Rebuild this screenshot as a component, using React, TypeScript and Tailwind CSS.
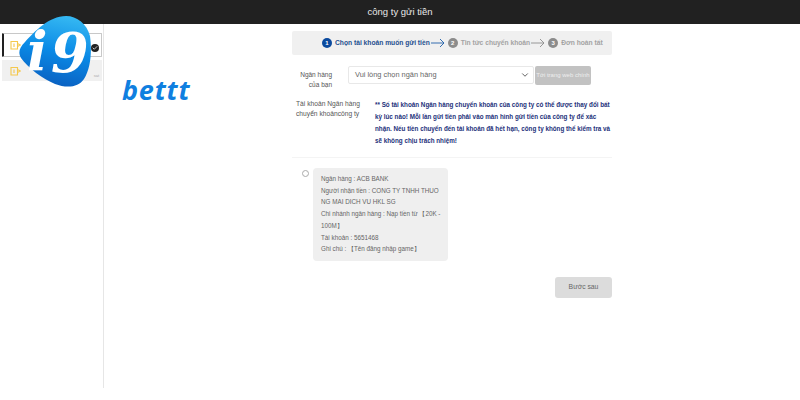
import React from "react";
import { ChevronDown, Check } from "lucide-react";

const steps = [
  { n: 1, label: "Chọn tài khoản muốn gửi tiền", active: true },
  { n: 2, label: "Tin tức chuyển khoản", active: false },
  { n: 3, label: "Đơn hoàn tất", active: false },
];

const Arrow = ({ color }: { color: string }) => (
  <svg width="14" height="10" viewBox="0 0 14 10" fill="none" stroke={color} strokeWidth="0.9" className="shrink-0">
    <path d="M0 5h13M9 1l4 4-4 4" />
  </svg>
);

const SideIcon = () => (
  <svg width="11" height="10" viewBox="0 0 11 10" fill="none" stroke="#f5c84c" strokeWidth="1.1" className="shrink-0">
    <path d="M1 1.500h6.500v7.500H1zM7.500 3.500L10.500 5l-3 1.500M4 3.500v3.500" />
  </svg>
);

const App: React.FC = () => {
  return (
    <div className="relative w-[800px] h-[400px] overflow-hidden bg-white font-['Liberation_Sans',Arial,sans-serif]">
      {/* Header */}
      <div className="h-[24px] bg-[#212121] flex items-center justify-center">
        <span className="text-[9.500px] text-[#e8e8e8]">công ty gửi tiền</span>
      </div>

      <div className="flex h-[364px]">
        {/* Sidebar */}
        <div className="w-[104px] border-r border-[#e6e6e6] pt-[9px] pl-[2px] pr-[1px]">
          <div className="h-[24px] border border-[#c8c8c8] border-l-[2px] border-l-[#222] rounded-[1px] flex items-center justify-between pl-[6px] pr-[2px]">
            <SideIcon />
            <span className="w-[8px] h-[8px] mt-[5px] rounded-full bg-[#222] flex items-center justify-center">
              <Check size={6} color="#fff" strokeWidth={3} />
            </span>
          </div>
          <div className="h-[21px] mt-[3px] bg-[#f0f0f0] flex items-center justify-between pl-[8px] pr-[3px]">
            <SideIcon />
            <span className="text-[4px] text-[#aaa] mt-[10px]">sat</span>
          </div>
        </div>

        {/* Main column */}
        <div className="ml-[188px] w-[320px] pt-[7px]">
          <div className="h-[24px] bg-[#f0f0f0] rounded-[2px] flex items-center pl-[30px] text-[6.700px] font-bold">
            {steps.map((s, i) => (
              <React.Fragment key={s.n}>
                <span
                  className={`shrink-0 w-[10px] h-[10px] rounded-full text-white flex items-center justify-center text-[6px] mr-[3px] ${
                    s.active ? "bg-[#0b4a9e]" : "bg-[#8c8c8c]"
                  }`}
                >
                  {s.n}
                </span>
                <span className={`whitespace-nowrap ${s.active ? "text-[#1f4f8f]" : "text-[#a3a3a3]"}`}>{s.label}</span>
                {i < 2 && (
                  <span className="ml-[1px] mr-[3px]">
                    <Arrow color={s.active ? "#1f5fa8" : "#8c8c8c"} />
                  </span>
                )}
              </React.Fragment>
            ))}
          </div>

          {/* Bank select */}
          <div className="flex mt-[11px]">
            <div className="w-[40px] pt-[4px] text-right text-[6.500px] leading-[10px] text-[#555] whitespace-nowrap">
              <div>Ngân hàng</div>
              <div>của bạn</div>
            </div>
            <div className="ml-[16px] w-[186px] h-[18px] border border-[#e8e8e8] rounded-[2px] flex items-center justify-between pl-[6px] pr-[3px] text-[7.400px] text-[#666]">
              <span>Vui lòng chọn ngân hàng</span>
              <ChevronDown size={10} color="#444" strokeWidth={2} />
            </div>
            <div className="ml-[1px] w-[56px] h-[19px] bg-[#c2c2c2] rounded-[2px] text-[6px] text-[#eee] flex items-center justify-center overflow-hidden whitespace-nowrap">
              Tới trang web chính
            </div>
          </div>

          {/* Notice */}
          <div className="flex mt-[9px] pb-[10px] border-b border-[#f4f4f4]">
            <div className="w-[68px] shrink-0 pl-[4px] text-[6.700px] leading-[10px] text-[#555] whitespace-nowrap">
              <div>Tài khoản Ngân hàng</div>
              <div>chuyển khoảncông ty</div>
            </div>
            <p className="ml-[15px] text-[6.300px] leading-[12px] font-bold text-[#23307a]">
              ** Số tài khoản Ngân hàng chuyển khoản của công ty có thể được thay đổi bất kỳ lúc nào! Mỗi lần gửi tiền phải vào màn hình gửi tiền của công ty để xác nhận. Nếu tiền chuyển đến tài khoản đã hết hạn, công ty không thể kiểm tra và sẽ không chịu trách nhiệm!
            </p>
          </div>

          {/* Account card */}
          <div className="flex mt-[10px]">
            <span className="shrink-0 w-[7px] h-[7px] mt-[2px] ml-[10px] rounded-full border border-[#aaa] bg-white" />
            <div className="ml-[4px] w-[135px] h-[93px] bg-[#efefef] rounded-[4px] pl-[8px] pt-[5px] text-[6.300px] leading-[11.700px] text-[#666] whitespace-nowrap">
              <div>Ngân hàng : ACB BANK</div>
              <div>Người nhận tiền : CONG TY TNHH THUO</div>
              <div>NG MAI DICH VU HKL SG</div>
              <div>Chi nhánh ngân hàng : Nạp tiền từ 【20K -</div>
              <div>100M】</div>
              <div>Tài khoản : 5651468</div>
              <div>Ghi chú : 【Tên đăng nhập game】</div>
            </div>
          </div>

          <div className="flex justify-end mt-[16px]">
            <div className="w-[57px] h-[21px] bg-[#dcdcdc] rounded-[3px] text-[6.800px] text-[#666] flex items-center justify-center">
              Bước sau
            </div>
          </div>
        </div>
      </div>

      {/* i9 logo over sidebar */}
      <div className="absolute left-[19px] top-[16px] w-[72px] h-[72px]">
        <svg width="72" height="72" viewBox="0 0 72 72" className="absolute inset-0">
          <defs>
            <linearGradient id="logoBlue" x1="0.650" y1="0" x2="0.450" y2="1">
              <stop offset="0" stopColor="#35b8f2" />
              <stop offset="0.500" stopColor="#0a8ae6" />
              <stop offset="1" stopColor="#0a5fc0" />
            </linearGradient>
          </defs>
          <path
            d="M47 0C58 0 68 8 71 20C73 34 72 52 65 63C59 72 47 72 36 68C24 63 9 52 2 42C-1 37 0 32 6 26C15 16 30 0 47 0Z"
            fill="url(#logoBlue)"
          />
        </svg>
        <span className="absolute left-[8px] top-[-1px] text-[54px] leading-[72px] font-bold italic text-white font-['DejaVu_Serif',serif]">
          i
        </span>
        <span className="absolute left-[32px] top-[1px] text-[54px] leading-[72px] font-bold italic text-white font-['DejaVu_Serif',serif]">
          9
        </span>
      </div>

      <div className="absolute left-[122px] top-[74px] text-[27px] leading-[32px] font-bold italic text-[#0f7fe0] font-['Open_Sans',sans-serif] tracking-[0.8px]">
        bettt
      </div>
    </div>
  );
};

export default App;
